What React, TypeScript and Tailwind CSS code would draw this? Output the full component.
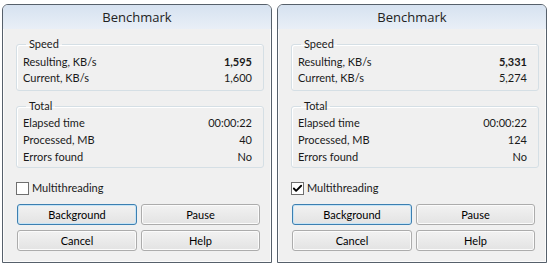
import { Check } from "lucide-react";

type Row = { label: string; value: string; bold?: boolean };

const font = { fontFamily: 'Lato, "Open Sans", sans-serif' };

const Group = ({ title, rows, rowClass, className }: { title: string; rows: Row[]; rowClass: string; className?: string }) => (
  <fieldset className={`rounded-[3px] border border-[#d5dfe5] pl-[6px] pr-[11px] shadow-[inset_1px_1px_0_#ffffff] ${className ?? ""}`}>
    <legend className="ml-[3px] px-[3px] text-[11px] leading-[14px]">{title}</legend>
    {rows.map((r) => (
      <div key={r.label} className={`flex items-center justify-between text-[11px] ${rowClass}`}>
        <span>{r.label}</span>
        <span className={r.bold ? "font-bold" : ""}>{r.value}</span>
      </div>
    ))}
  </fieldset>
);

const Btn = ({ label, primary, w }: { label: string; primary?: boolean; w: string }) => (
  <button
    className={`h-[21px] ${w} rounded-[3px] border bg-gradient-to-b from-[#f2f2f2] to-[#e3e3e3] text-[11px] leading-none text-black ${
      primary ? "border-[#3c7fb1] shadow-[inset_0_0_0_1px_#c6e4f6]" : "border-[#acacac] shadow-[inset_0_0_0_1px_#fbfbfb]"
    }`}
  >
    {label}
  </button>
);

const Window = ({ resulting, current, processed, multi }: { resulting: string; current: string; processed: string; multi: boolean }) => (
  <div className="flex h-[259px] w-[270px] flex-col rounded-t-[6px] border border-[#56606b] bg-[#f0f0f0] text-[#1a1a1a]">
    <div
      className="flex h-[24px] items-center justify-center rounded-t-[5px] bg-gradient-to-b from-[#d6e2f0] to-[#e9eff7] pt-[2px] text-[13px] text-[#222]"
      style={{ fontFamily: '"Open Sans", sans-serif' }}
    >
      Benchmark
    </div>
    <div className="flex flex-1 flex-col border-x border-b border-[#fcfcfc] pl-[12px] pr-[6px] pt-[8px]">
      <Group
        title="Speed"
        rowClass="h-[16px]"
        className="pb-[4px] pt-[3px]"
        rows={[
          { label: "Resulting, KB/s", value: resulting, bold: true },
          { label: "Current, KB/s", value: current },
        ]}
      />
      <Group
        title="Total"
        rowClass="h-[17px]"
        className="mt-[8px] pb-[1px] pt-[2px]"
        rows={[
          { label: "Elapsed time", value: "00:00:22" },
          { label: "Processed, MB", value: processed },
          { label: "Errors found", value: "No" },
        ]}
      />
      <div className="mt-[13px] flex h-[14px] items-center gap-[3px] text-[11px]">
        <div className="flex h-[13px] w-[13px] items-center justify-center border border-[#6f6f6f] bg-white">
          {multi && <Check className="h-[11px] w-[11px] text-black" strokeWidth={4} />}
        </div>
        <span>Multithreading</span>
      </div>
      <div className="mt-[9px] ml-[1px] flex flex-col gap-[5px]">
        <div className="flex gap-[4px]">
          <Btn label="Background" primary w="w-[120px]" />
          <Btn label="Pause" w="w-[119px]" />
        </div>
        <div className="flex gap-[4px]">
          <Btn label="Cancel" w="w-[120px]" />
          <Btn label="Help" w="w-[119px]" />
        </div>
      </div>
    </div>
  </div>
);

export default function App() {
  return (
    <div className="flex h-[266px] w-[548px] gap-[5px] bg-white pl-[2px] pt-[4px]" style={font}>
      <Window resulting="1,595" current="1,600" processed="40" multi={false} />
      <Window resulting="5,331" current="5,274" processed="124" multi={true} />
    </div>
  );
}
